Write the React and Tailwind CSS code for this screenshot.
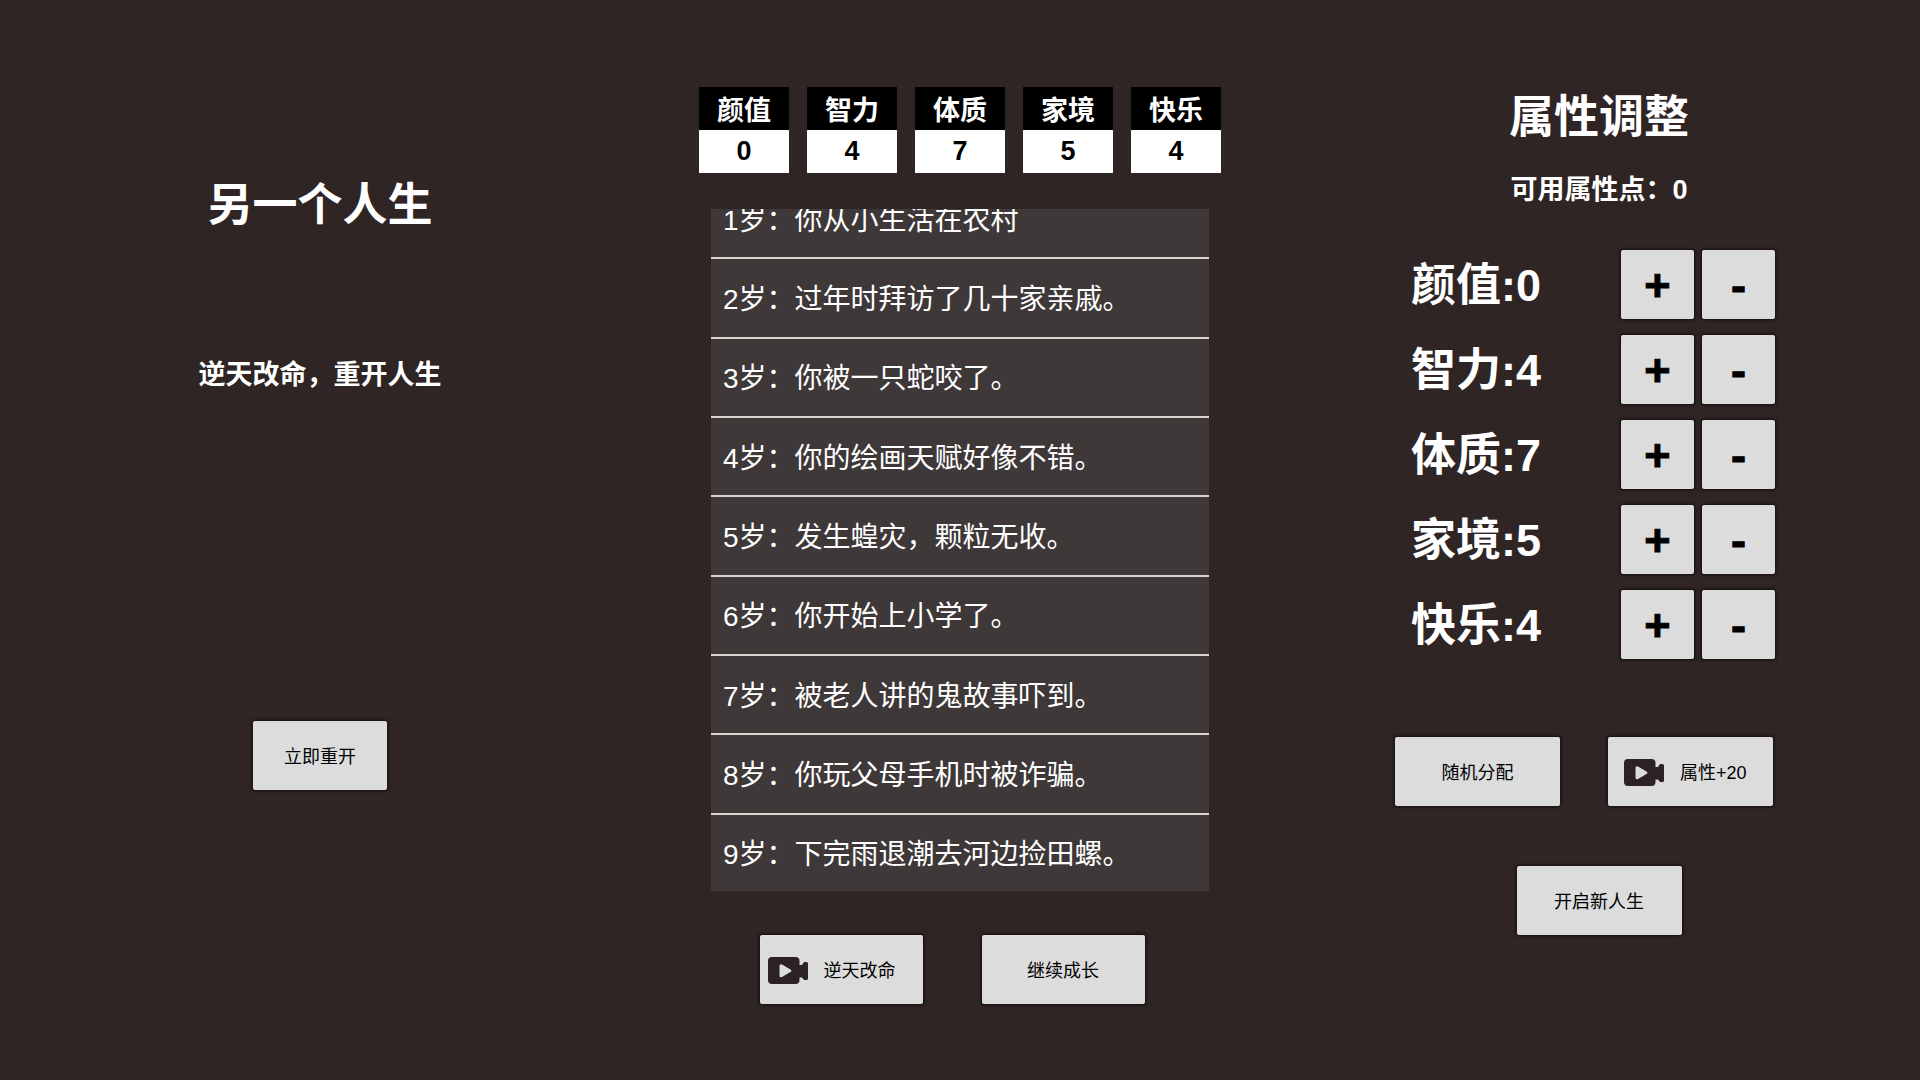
import { useState } from "react";
import clsx from "clsx";

const initialStats = [
	{ name: "颜值", value: 0 },
	{ name: "智力", value: 4 },
	{ name: "体质", value: 7 },
	{ name: "家境", value: 5 },
	{ name: "快乐", value: 4 }
];

const events = [
	"你从小生活在农村",
	"过年时拜访了几十家亲戚。",
	"你被一只蛇咬了。",
	"你的绘画天赋好像不错。",
	"发生蝗灾，颗粒无收。",
	"你开始上小学了。",
	"被老人讲的鬼故事吓到。",
	"你玩父母手机时被诈骗。",
	"下完雨退潮去河边捡田螺。"
];

const VideoIcon = () => (
	<svg viewBox="0 0 40 28" className="w-10 h-7 shrink-0" fill="#2d2223" aria-hidden="true">
		<path
			fillRule="evenodd"
			d="M4 0H27.5Q31.5 0 31.5 4V8H34L36 5H38.5Q40 5 40 6.5V21.5Q40 23 38.5 23H36L34 20.5H31.5V23Q31.5 27 27.5 27H4Q0 27 0 23V4Q0 0 4 0ZM11.5 9V18.5Q11.5 21 14 20L22.5 15Q24.500 13.700 22.500 12.400L14 7.500Q11.500 6.500 11.500 9Z"
		/>
	</svg>
);

const GameButton = ({ className, children, ...props }) => (
	<button
		type="button"
		className={clsx(
			"flex items-center h-[69px] pt-0.5 rounded-[2px] bg-[#dcdcdc] text-black shadow-[0_0_3px_1px_rgba(12,6,6,0.8)] hover:bg-white cursor-pointer",
			className
		)}
		{...props}
	>
		{children}
	</button>
);

const StartPanel = () => (
	<section className="flex flex-col items-center pt-44">
		<h1 className="text-[45px] leading-[60px] font-bold">另一个人生</h1>
		<p className="mt-[121px] text-[27px] leading-9 font-bold">逆天改命，重开人生</p>
		<GameButton className="mt-[328px] w-[134px] justify-center text-lg">立即重开</GameButton>
	</section>
);

const LifePanel = ({ stats }) => (
	<section className="flex flex-col items-center pt-[87px]">
		<dl className="flex gap-[18px] text-[27px] font-bold text-center">
			{stats.map(({ name, value }) => (
				<div key={name} className="w-[90px]">
					<dt className="bg-black pt-1.5 leading-[37px]">{name}</dt>
					<dd className="bg-white text-black leading-[43px]">{value}</dd>
				</div>
			))}
		</dl>
		<div className="mt-9 w-[498px] h-[682px] overflow-hidden bg-[#3e3838]">
			{/* scrolled down so the first year is partly hidden */}
			<ol className="-mt-[29px] h-[714px] grid auto-rows-fr text-[28px]">
				{events.map((text, index) => (
					<li key={index} className="flex items-center px-3 pt-1 border-b-2 border-[#dbd3d2]">
						{index + 1}岁：{text}
					</li>
				))}
			</ol>
		</div>
		<div className="mt-11 mr-4 flex gap-[59px] text-lg">
			<GameButton className="w-[163px] pl-2 gap-4">
				<VideoIcon/>
				逆天改命
			</GameButton>
			<GameButton className="w-[163px] justify-center">继续成长</GameButton>
		</div>
	</section>
);

const AdjustPanel = ({ stats, points, change }) => (
	<section className="flex flex-col items-center pt-[88px] pr-0.5">
		<h2 className="text-[45px] leading-[60px] font-bold">属性调整</h2>
		<p className="mt-6 text-[27px] leading-9 font-bold">可用属性点：{points}</p>
		<ul className="mt-[42px] mr-3 w-[364px] flex flex-col gap-4 text-[45px] leading-[60px] font-bold">
			{stats.map(({ name, value }, index) => (
				<li key={name} className="flex items-center gap-2">
					<span className="flex-1 pt-0.5">{name}:{value}</span>
					<GameButton
						className="w-[73px] justify-center [-webkit-text-stroke:1px_black]"
						aria-label={`${name} +`}
						onClick={() => change(index, 1)}
					>
						+
					</GameButton>
					<GameButton
						className="w-[73px] justify-center [-webkit-text-stroke:1px_black]"
						aria-label={`${name} -`}
						onClick={() => change(index, -1)}
					>
						-
					</GameButton>
				</li>
			))}
		</ul>
		<div className="mt-[78px] mr-[30px] flex gap-12 text-lg">
			<GameButton className="w-[165px] justify-center">随机分配</GameButton>
			<GameButton className="w-[165px] pl-4 gap-4">
				<VideoIcon/>
				属性+20
			</GameButton>
		</div>
		<GameButton className="mt-[60px] w-[165px] justify-center text-lg">开启新人生</GameButton>
	</section>
);

const App = () => {
	const [stats, setStats] = useState(initialStats);
	const [points, setPoints] = useState(0);

	const change = (index, amount) => {
		if (amount > points || stats[index].value + amount < 0) return;
		setStats(stats.map((stat, i) => i === index ? { ...stat, value: stat.value + amount } : stat));
		setPoints(points - amount);
	}

	return (
		<main className="min-h-screen grid grid-cols-3 bg-[#302525] text-white font-['Liberation_Sans','Noto_Sans_CJK_SC',sans-serif]">
			<StartPanel/>
			<LifePanel stats={stats}/>
			<AdjustPanel stats={stats} points={points} change={change}/>
		</main>
	)
}

export default App
